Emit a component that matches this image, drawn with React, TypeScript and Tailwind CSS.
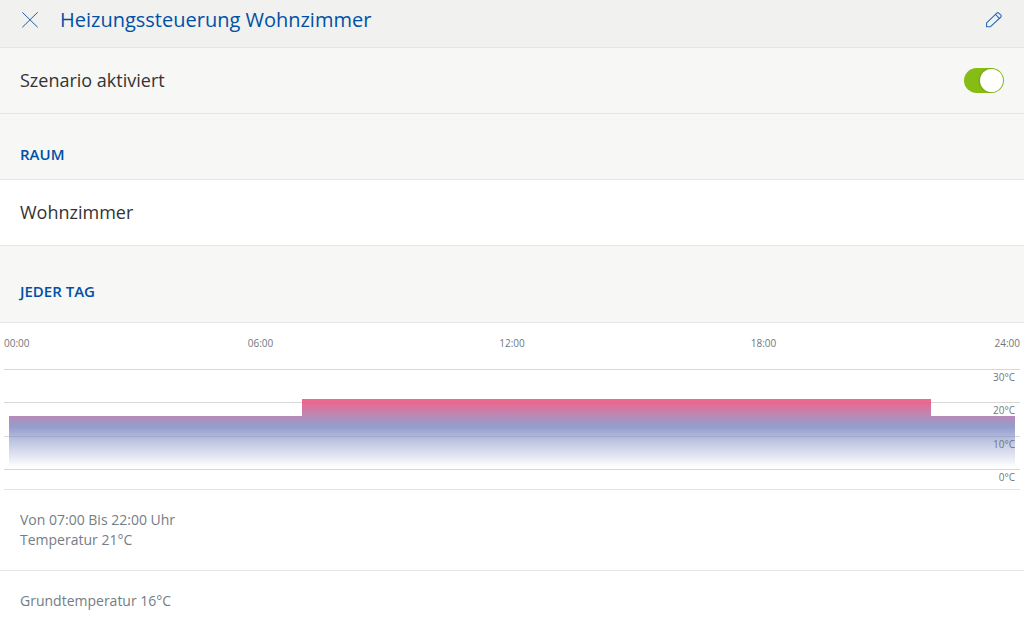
import { useState } from "react";

type Slot = { from: number; to: number; temp: number };

const slots: Slot[] = [
  { from: 0, to: 7, temp: 16 },
  { from: 7, to: 22, temp: 21 },
  { from: 22, to: 24, temp: 16 },
];

const hours = [
  { label: "00:00", x: "0%", dx: -5, anchor: "start" },
  { label: "06:00", x: "25%", dx: 0, anchor: "middle" },
  { label: "12:00", x: "50%", dx: 0, anchor: "middle" },
  { label: "18:00", x: "75%", dx: 0, anchor: "middle" },
  { label: "24:00", x: "100%", dx: 5, anchor: "end" },
] as const;

const gridLines = [
  { label: "30°C", y: 46 },
  { label: "20°C", y: 79 },
  { label: "10°C", y: 113 },
  { label: "0°C", y: 146 },
];

const BASE = 146;
const toY = (temp: number) => Math.round(BASE - (temp * 100) / 30);
const pct = (hour: number) => `${(hour / 24) * 100}%`;

function TemperatureChart() {
  return (
    <div className="mx-1 border-b border-[#e4e5e4] px-[5px]">
      <svg
        className="block h-[166px] w-full overflow-visible"
        role="img"
        aria-label="Temperaturverlauf"
      >
        <defs>
          <linearGradient id="heat" gradientUnits="userSpaceOnUse" x1="0" y1="75" x2="0" y2="144">
            <stop offset="0" stopColor="#ea5a84" stopOpacity="0.9" />
            <stop offset="0.07" stopColor="#e65c87" stopOpacity="0.92" />
            <stop offset="0.25" stopColor="#b27cae" stopOpacity="0.9" />
            <stop offset="0.42" stopColor="#8390c5" stopOpacity="0.88" />
            <stop offset="0.6" stopColor="#8390c5" stopOpacity="0.56" />
            <stop offset="1" stopColor="#8390c5" stopOpacity="0" />
          </linearGradient>
        </defs>
        {gridLines.map((g) => (
          <rect key={g.label} x="-5" y={g.y} width="101%" height="1" fill="#d8d8d6" />
        ))}
        <g shapeRendering="crispEdges">
          {slots.map((s) => (
            <rect
              key={s.from}
              x={pct(s.from)}
              y={toY(s.temp)}
              width={pct(s.to - s.from)}
              height={BASE - toY(s.temp)}
              fill="url(#heat)"
            />
          ))}
        </g>
        <g fill="#6f777d" fontSize="10">
          {hours.map((h) => (
            <text key={h.label} x={h.x} y="24" dx={h.dx} textAnchor={h.anchor}>
              {h.label}
            </text>
          ))}
          {gridLines.map((g) => (
            <text key={g.label} x="100%" y={g.y + 12} textAnchor="end">
              {g.label}
            </text>
          ))}
        </g>
      </svg>
    </div>
  );
}

export default function App() {
  const [active, setActive] = useState(true);
  return (
    <main className="min-h-screen bg-white font-['Open_Sans',sans-serif] text-[#333333]">
      <header className="flex items-center border-b border-[#e4e5e4] bg-[#f1f1f0] px-5 pb-[7px] text-[#0050a5]">
        <button type="button" aria-label="Schließen" className="flex h-10 w-5 items-center justify-center">
          <svg className="h-5 w-5" viewBox="0 0 20 20" fill="none" stroke="currentColor" strokeWidth="0.9">
            <path d="M2.3 2.3 17.7 17.3M17.7 2.3 2.3 17.3" />
          </svg>
        </button>
        <h1 className="ml-5 flex-1 text-[20px] leading-10">Heizungssteuerung Wohnzimmer</h1>
        <button type="button" aria-label="Bearbeiten" className="flex h-10 w-5 items-center justify-center">
          <svg
            className="h-5 w-5"
            viewBox="0 0 20 20"
            fill="none"
            stroke="#2a6cb8"
            strokeWidth="1.1"
            strokeLinejoin="round"
            strokeLinecap="round"
          >
            <path d="M2.5 16.8 2.6 12.9 12.8 3.1Q13.8 2.2 14.8 3.1L16.9 5.1Q17.8 6 16.9 7L6.5 16.6Z" />
            <path d="M11.5 4.4 15.3 8.3" />
          </svg>
        </button>
      </header>

      <label className="flex items-center justify-between border-b border-[#e4e5e4] bg-[#f7f7f6] px-5 py-5 text-lg leading-[25px]">
        Szenario aktiviert
        <input
          type="checkbox"
          role="switch"
          checked={active}
          onChange={(e) => setActive(e.target.checked)}
          className="flex h-[25px] w-10 appearance-none items-center rounded-full bg-[#b5b8ba] p-px before:h-[23px] before:w-[23px] before:rounded-full before:bg-white before:shadow-[-1px_0_2px_rgba(0,0,0,0.15)] checked:justify-end checked:bg-[#86bc14]"
        />
      </label>

      <h2 className="border-b border-[#e4e5e4] bg-[#f7f7f6] px-5 pt-[30px] pb-[15px] text-[15px] leading-5 font-semibold text-[#0050a5]">
        RAUM
      </h2>
      <p className="border-b border-[#e4e5e4] px-5 py-5 text-lg leading-[25px]">Wohnzimmer</p>

      <h2 className="border-b border-[#e4e5e4] bg-[#f7f7f6] px-5 pt-[35px] pb-[21px] text-[15px] leading-5 font-semibold text-[#0050a5]">
        JEDER TAG
      </h2>
      <TemperatureChart />

      <div className="text-sm leading-5 text-[#757d83]">
        <p className="border-b border-[#e4e5e4] px-5 py-5">
          Von 07:00 Bis 22:00 Uhr
          <br />
          Temperatur 21°C
        </p>
        <p className="px-5 pt-5">Grundtemperatur 16°C</p>
      </div>
    </main>
  );
}
